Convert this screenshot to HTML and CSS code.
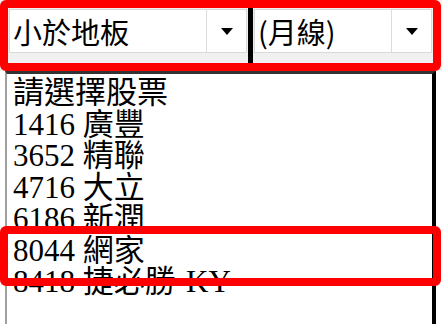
FILE: index.html
```html
<!DOCTYPE html>
<html>
<head>
<meta charset="utf-8">
<link rel="stylesheet" href="styles.css">
</head>
<body>
<div class="page">
  <div class="toolbar">
    <div class="combo combo-a">
      <div class="combo-text">小於地板</div>
      <div class="combo-btn"><span class="arrow"></span></div>
    </div>
    <div class="sep"></div>
    <div class="combo combo-b">
      <div class="combo-text">(月線)</div>
      <div class="combo-btn"><span class="arrow"></span></div>
    </div>
  </div>
  <div class="listbox">
    <div class="item">請選擇股票</div>
    <div class="item">1416 廣豐</div>
    <div class="item">3652 精聯</div>
    <div class="item">4716 大立</div>
    <div class="item">6186 新潤</div>
    <div class="item">8044 網家</div>
    <div class="item">8418 捷必勝-KY</div>
  </div>
  <div class="mark mark-top"></div>
  <div class="mark mark-row"></div>
</div>
</body>
</html>
```
FILE: styles.css
```css
html, body {
  margin: 0;
  padding: 0;
  background: #ffffff;
}
.page {
  position: relative;
  width: 442px;
  height: 324px;
  overflow: hidden;
  font-family: "Liberation Serif", "Noto Sans CJK TC", serif;
  color: #000;
}
.toolbar {
  height: 71px;
  background: #f0f0f0;
  display: flex;
  align-items: flex-start;
  padding: 9px 6px 0 9px;
  box-sizing: border-box;
}
.combo {
  height: 44px;
  background: #fff;
  border: 1px solid #d9d9d9;
  box-sizing: border-box;
  display: flex;
}
.combo-a { width: 238px; }
.combo-b { width: 178px; }
.combo-text {
  flex: 1;
  font-family: "Noto Sans CJK TC", sans-serif;
  font-size: 29px;
  line-height: 42px;
  padding-left: 3px;
  white-space: nowrap;
}
.combo-btn {
  width: 39px;
  border-left: 1px solid #dcdcdc;
  display: flex;
  align-items: center;
  justify-content: center;
}
.arrow {
  width: 0;
  height: 0;
  border-left: 6px solid transparent;
  border-right: 6px solid transparent;
  border-top: 7px solid #000;
}
.sep {
  width: 5px;
  align-self: stretch;
  margin-top: -9px;
  background: #000;
  margin-left: 1px;
  margin-right: 1px;
}
.listbox {
  margin-left: 5px;
  margin-right: 6px;
  height: 260px;
  border-left: 2px solid #a0a0a0;
  border-top: 3px solid #333;
  border-right: 4px solid #000;
  padding: 3px 0 0 6px;
  font-size: 31px;
  line-height: 31.5px;
}
.item {
  white-space: nowrap;
  font-family: "Liberation Serif", "Noto Sans CJK TC", serif;
}
.mark {
  position: absolute;
  left: 0;
  border: 8px solid #ff0000;
  border-radius: 6px;
  box-sizing: border-box;
}
.mark-top {
  top: 0;
  width: 441px;
  height: 71px;
}
.mark-row {
  top: 226px;
  width: 441px;
  height: 60px;
}
```
